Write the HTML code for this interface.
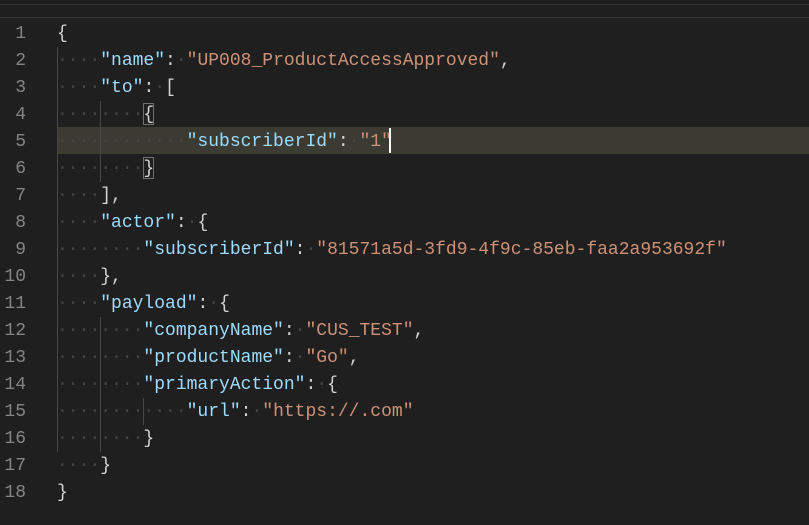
<!DOCTYPE html>
<html><head><meta charset="utf-8"><style>
body{margin:0;width:809px;height:525px;background:#1f1f1f;overflow:hidden;position:relative;font-family:"Liberation Mono",monospace;font-size:18px}
.hl{position:absolute;left:57px;top:127px;width:752px;height:27px;background:#3b3b33}
.ln{position:absolute;left:0;width:26px;text-align:right;color:#858585;height:27px;line-height:27px;margin-top:1px}
.c{position:absolute;left:57px;height:27px;line-height:27px;white-space:pre;color:#d4d4d4;margin-top:1px}
.d{color:#444}
.k{color:#9cdcfe}.s{color:#ce9178}
.g{position:absolute;width:1px;background:#484848}
.box{position:absolute;border:1px solid #707070;width:9px;height:20px}
</style></head><body>
<div style="position:absolute;left:0;top:4px;width:809px;height:1px;background:#333"></div>
<div style="position:absolute;left:0;top:17px;width:809px;height:1px;background:#3a3a3a"></div>
<div class="hl"></div>
<div class="g" style="left:57px;top:47px;height:405px"></div>
<div class="g" style="left:100px;top:101px;height:81px"></div>
<div class="g" style="left:100px;top:317px;height:135px"></div>
<div class="g" style="left:143px;top:398px;height:27px"></div>
<div class="box" style="left:143px;top:103px"></div>
<div class="box" style="left:143px;top:157px"></div>
<div style="position:absolute;left:389px;top:128px;width:2px;height:25px;background:#fff"></div>

<div class="ln" style="top:20px">1</div><div class="c" style="top:20px">{</div>
<div class="ln" style="top:47px">2</div><div class="c" style="top:47px"><span class="d">····</span><span class="k">"name"</span>:<span class="d">·</span><span class="s">"UP008_ProductAccessApproved"</span>,</div>
<div class="ln" style="top:74px">3</div><div class="c" style="top:74px"><span class="d">····</span><span class="k">"to"</span>:<span class="d">·</span>[</div>
<div class="ln" style="top:101px">4</div><div class="c" style="top:101px"><span class="d">········</span>{</div>
<div class="ln" style="top:128px">5</div><div class="c" style="top:128px"><span class="d">············</span><span class="k">"subscriberId"</span>:<span class="d">·</span><span class="s">"1"</span></div>
<div class="ln" style="top:155px">6</div><div class="c" style="top:155px"><span class="d">········</span>}</div>
<div class="ln" style="top:182px">7</div><div class="c" style="top:182px"><span class="d">····</span>],</div>
<div class="ln" style="top:209px">8</div><div class="c" style="top:209px"><span class="d">····</span><span class="k">"actor"</span>:<span class="d">·</span>{</div>
<div class="ln" style="top:236px">9</div><div class="c" style="top:236px"><span class="d">········</span><span class="k">"subscriberId"</span>:<span class="d">·</span><span class="s">"81571a5d-3fd9-4f9c-85eb-faa2a953692f"</span></div>
<div class="ln" style="top:263px">10</div><div class="c" style="top:263px"><span class="d">····</span>},</div>
<div class="ln" style="top:290px">11</div><div class="c" style="top:290px"><span class="d">····</span><span class="k">"payload"</span>:<span class="d">·</span>{</div>
<div class="ln" style="top:317px">12</div><div class="c" style="top:317px"><span class="d">········</span><span class="k">"companyName"</span>:<span class="d">·</span><span class="s">"CUS_TEST"</span>,</div>
<div class="ln" style="top:344px">13</div><div class="c" style="top:344px"><span class="d">········</span><span class="k">"productName"</span>:<span class="d">·</span><span class="s">"Go"</span>,</div>
<div class="ln" style="top:371px">14</div><div class="c" style="top:371px"><span class="d">········</span><span class="k">"primaryAction"</span>:<span class="d">·</span>{</div>
<div class="ln" style="top:398px">15</div><div class="c" style="top:398px"><span class="d">············</span><span class="k">"url"</span>:<span class="d">·</span><span class="s">"https://.com"</span></div>
<div class="ln" style="top:425px">16</div><div class="c" style="top:425px"><span class="d">········</span>}</div>
<div class="ln" style="top:452px">17</div><div class="c" style="top:452px"><span class="d">····</span>}</div>
<div class="ln" style="top:479px">18</div><div class="c" style="top:479px">}</div>
</body></html>
